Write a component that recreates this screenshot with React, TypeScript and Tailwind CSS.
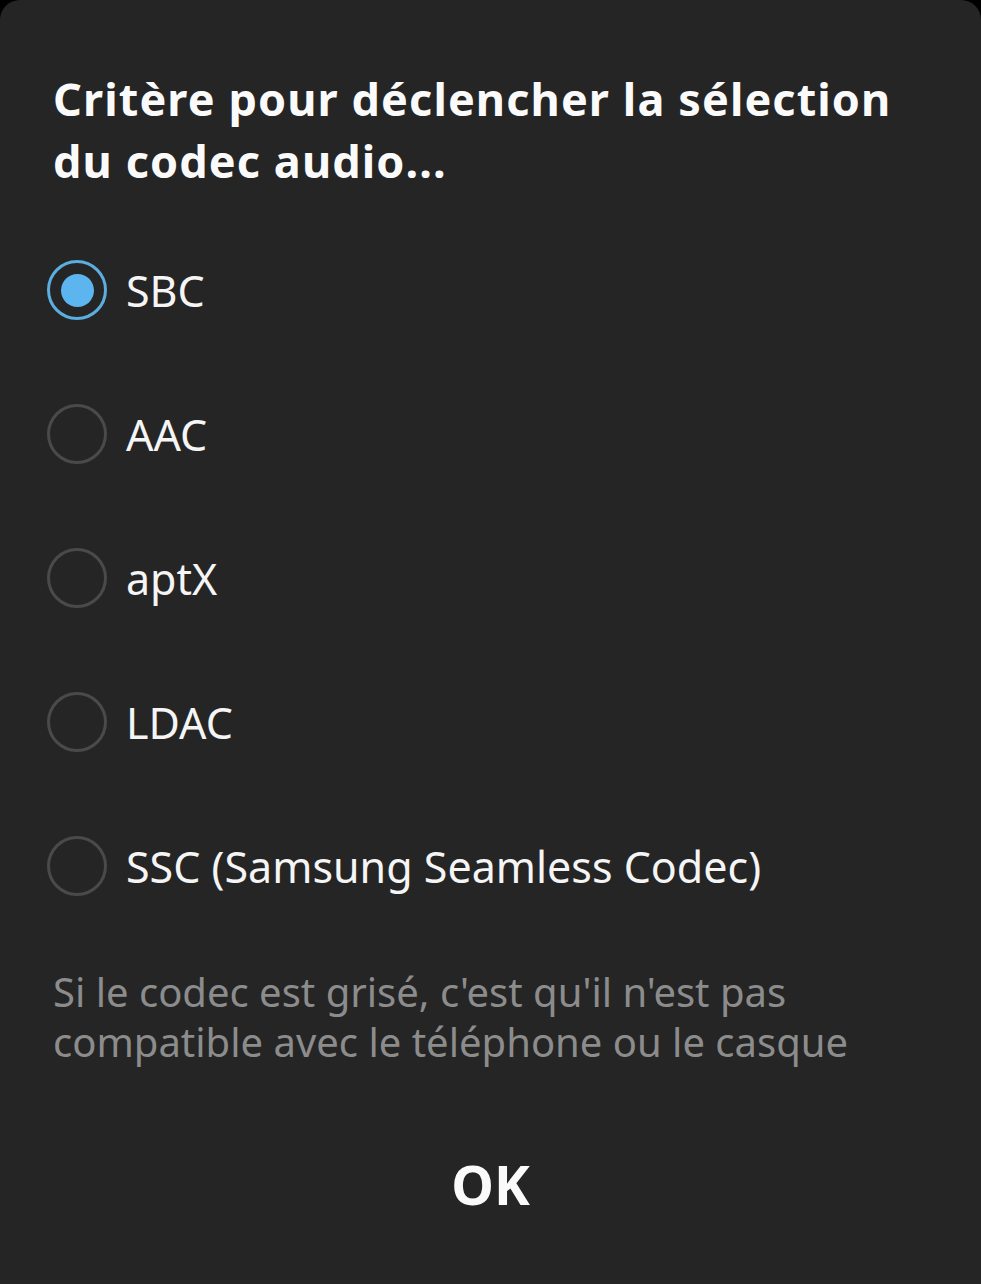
import React, { useState } from "react";

const CODECS = ["SBC", "AAC", "aptX", "LDAC", "SSC (Samsung Seamless Codec)"];

function Radio({ checked }: { checked: boolean }) {
  return (
    <div
      className={
        "flex h-[60px] w-[60px] shrink-0 items-center justify-center rounded-full border-[3px] " +
        (checked ? "border-[#5aaee0]" : "border-[#4a4a4a]")
      }
    >
      {checked && <div className="h-[33px] w-[33px] rounded-full bg-[#5cb5ee]" />}
    </div>
  );
}

export default function App() {
  const [selected, setSelected] = useState(0);

  return (
    <div className="h-[1284px] w-[981px] bg-black">
      <div
        className="flex h-full flex-col rounded-t-[20px] bg-[#252525] text-white"
        style={{ fontFamily: '"Noto Sans", "Open Sans", sans-serif' }}
      >
        <h1 className="px-[53px] pt-[68px] text-[45px] font-bold leading-[62px] tracking-[1.1px] text-[#fafafa]">
          Critère pour déclencher la sélection du codec audio...
        </h1>

        <div className="mt-[26px] flex flex-col">
          {CODECS.map((c, i) => (
            <button
              key={c}
              onClick={() => setSelected(i)}
              className="flex h-[144px] items-center gap-[19px] px-[47px] text-left"
            >
              <Radio checked={selected === i} />
              <span className="text-[43px] leading-none text-[#f5f5f5]">{c}</span>
            </button>
          ))}
        </div>

        <p className="mt-[29px] px-[53px] text-[40px] leading-[50px] text-[#8c8c8c]">
          Si le codec est grisé, c'est qu'il n'est pas compatible avec le téléphone ou le casque
        </p>

        <div className="mt-[90px] flex justify-center">
          <button className="text-[54px] font-bold leading-none text-[#fafafa]">OK</button>
        </div>
      </div>
    </div>
  );
}
